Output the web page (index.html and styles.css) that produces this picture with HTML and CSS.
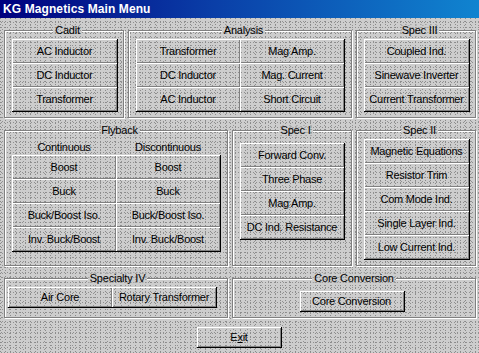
FILE: index.html
```html
<!DOCTYPE html>
<html>
<head>
<meta charset="utf-8">
<link rel="stylesheet" href="styles.css">
</head>
<body class="page">
<div class="window">
  <div class="titlebar">KG Magnetics Main Menu</div>
  <div class="main">
    <fieldset class="group g-cadit">
      <legend class="legend">Cadit</legend>
      <div class="stack cols1 w106 mt2">
        <div class="btn">AC Inductor</div>
        <div class="btn">DC Inductor</div>
        <div class="btn">Transformer</div>
      </div>
    </fieldset>
    <fieldset class="group g-analysis">
      <legend class="legend">Analysis</legend>
      <div class="stack cols2 mt2">
        <div class="btn">Transformer</div>
        <div class="btn">Mag Amp.</div>
        <div class="btn">DC Inductor</div>
        <div class="btn">Mag. Current</div>
        <div class="btn">AC Inductor</div>
        <div class="btn">Short Circuit</div>
      </div>
    </fieldset>
    <fieldset class="group g-spec3">
      <legend class="legend">Spec III</legend>
      <div class="stack cols1 w106 mt2">
        <div class="btn">Coupled Ind.</div>
        <div class="btn">Sinewave Inverter</div>
        <div class="btn">Current Transformer</div>
      </div>
    </fieldset>

    <fieldset class="group g-flyback">
      <legend class="legend">Flyback</legend>
      <div class="subheads">
        <div class="subhead">Continuous</div>
        <div class="subhead">Discontinuous</div>
      </div>
      <div class="stack cols2">
        <div class="btn">Boost</div>
        <div class="btn">Boost</div>
        <div class="btn">Buck</div>
        <div class="btn">Buck</div>
        <div class="btn">Buck/Boost Iso.</div>
        <div class="btn">Buck/Boost Iso.</div>
        <div class="btn">Inv. Buck/Boost</div>
        <div class="btn">Inv. Buck/Boost</div>
      </div>
    </fieldset>
    <fieldset class="group g-spec1">
      <legend class="legend">Spec I</legend>
      <div class="stack cols1 w105 mt6">
        <div class="btn">Forward Conv.</div>
        <div class="btn">Three Phase</div>
        <div class="btn">Mag Amp.</div>
        <div class="btn">DC Ind. Resistance</div>
      </div>
    </fieldset>
    <fieldset class="group g-spec2">
      <legend class="legend">Spec II</legend>
      <div class="stack cols1 w106 mt2">
        <div class="btn">Magnetic Equations</div>
        <div class="btn">Resistor Trim</div>
        <div class="btn">Com Mode Ind.</div>
        <div class="btn">Single Layer Ind.</div>
        <div class="btn">Low Current Ind.</div>
      </div>
    </fieldset>

    <fieldset class="group g-special4">
      <legend class="legend">Specialty IV</legend>
      <div class="stack cols2 short mt2">
        <div class="btn">Air Core</div>
        <div class="btn">Rotary Transformer</div>
      </div>
    </fieldset>
    <fieldset class="group g-core">
      <legend class="legend">Core Conversion</legend>
      <div class="center-row">
        <div class="stack cols1 w105 short">
          <div class="btn">Core Conversion</div>
        </div>
      </div>
    </fieldset>
  </div>
  <div class="exit-row">
    <div class="stack cols1 w85 short">
      <div class="btn">E<span class="accel">x</span>it</div>
    </div>
  </div>
</div>
</body>
</html>
```

FILE: styles.css
```css
html, body {
  margin: 0;
  padding: 0;
}

.page {
  width: 479px;
  height: 353px;
  overflow: hidden;
  font-family: "Liberation Sans", Arial, sans-serif;
  font-size: 11px;
  color: #000;
}

.window,
.legend {
  background-color: #cdcdcd;
  background-image:
    radial-gradient(circle at 0.5px 0.5px, #8a8a8a 0.7px, transparent 0.8px),
    radial-gradient(circle at 0.5px 0.5px, #939393 0.7px, transparent 0.8px),
    radial-gradient(circle at 0.5px 0.5px, #8f8f8f 0.7px, transparent 0.8px);
  background-size: 5px 3px, 7px 4px, 3px 5px;
  background-position: 0 0, 2px 1px, 1px 2px;
  background-attachment: fixed;
}

.window {
  width: 479px;
  height: 353px;
  display: flex;
  flex-direction: column;
}

.titlebar {
  height: 18px;
  line-height: 18px;
  padding-left: 3px;
  background: linear-gradient(to right, #00007e 0%, #0a3fa8 45%, #1084d0 100%);
  color: #fff;
  font-weight: bold;
  font-size: 12px;
  letter-spacing: 0.1px;
  white-space: nowrap;
}

.main {
  display: grid;
  grid-template-columns: 120px 100px 120px 120px;
  grid-template-rows: 94px 142px 46px;
  column-gap: 4px;
  row-gap: 6px;
  padding: 6px 0 0 4px;
}

.group {
  margin: 0;
  padding: 0 0 0 7px;
  min-width: 0;
  border: 1px solid #808080;
  box-shadow: inset 1px 1px 0 #fff, 1px 1px 0 #fff;
}

.legend {
  margin: 0 auto;
  padding: 0 2px;
  line-height: 13px;
  height: 13px;
  letter-spacing: -0.2px;
}

.g-cadit { grid-column: 1; grid-row: 1; }
.g-analysis { grid-column: 2 / 4; grid-row: 1; }
.g-spec3 { grid-column: 4; grid-row: 1; }
.g-flyback { grid-column: 1 / 3; grid-row: 2; }
.g-spec1 { grid-column: 3; grid-row: 2; }
.g-spec2 { grid-column: 4; grid-row: 2; }
.g-special4 { grid-column: 1 / 3; grid-row: 3; padding-left: 3px; }
.g-core { grid-column: 3 / 5; grid-row: 3; padding-left: 0; }

.mt2 { margin-top: 2px; }
.mt6 { margin-top: 6px; }

.stack {
  display: grid;
  border-right: 1px solid #000;
  border-bottom: 1px solid #000;
  grid-auto-rows: 24px;
  width: max-content;
}

.stack.short { grid-auto-rows: 20px; }

.cols1.w106 { grid-template-columns: 105px; }
.cols1.w105 { grid-template-columns: 104px; }
.cols1.w85 { grid-template-columns: 84px; }
.cols2 { grid-template-columns: 104px 104px; }

.btn {
  display: flex;
  align-items: center;
  justify-content: center;
  white-space: nowrap;
  letter-spacing: -0.25px;
  box-shadow: inset 1px 1px 0 #fff, inset -1px -1px 0 #808080;
}

.subheads {
  display: grid;
  grid-template-columns: 104px 104px;
  height: 16px;
  margin-top: 2px;
  align-items: center;
}

.subhead {
  text-align: center;
  letter-spacing: -0.25px;
  line-height: 14px;
}

.center-row {
  display: flex;
  justify-content: center;
  margin-top: 6px;
  padding-right: 4px;
}

.exit-row {
  display: flex;
  justify-content: center;
  margin-top: 9px;
}

.accel {
  text-decoration: underline;
}
```
